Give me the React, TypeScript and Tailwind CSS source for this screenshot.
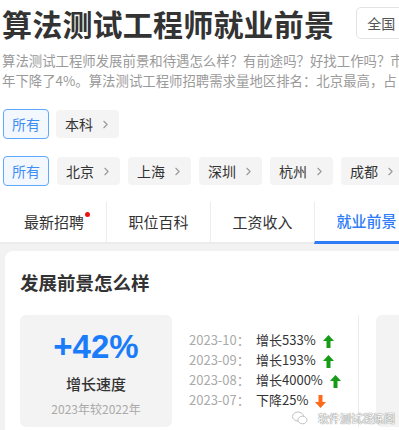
import { ChevronRight } from "lucide-react";

const DEGREES = ["本科"];
const CITIES = ["北京", "上海", "深圳", "杭州", "成都"];
const TABS = ["最新招聘", "职位百科", "工资收入", "就业前景"];
const TREND = [
  { month: "2023-10", label: "增长533%", up: true },
  { month: "2023-09", label: "增长193%", up: true },
  { month: "2023-08", label: "增长4000%", up: true },
  { month: "2023-07", label: "下降25%", up: false },
];

function Arrow({ up }: { up: boolean }) {
  return (
    <svg width="11" height="13" viewBox="0 0 11 13" className={up ? "" : "rotate-180"}>
      <path d="M5.5 0 L11 6 L7.5 6 L7.5 13 L3.5 13 L3.5 6 L0 6 Z" fill={up ? "#169b16" : "#ff6a1a"} />
    </svg>
  );
}

function Tag({ text, active }: { text: string; active?: boolean }) {
  if (active) {
    return (
      <span className="flex h-[30px] w-[46px] shrink-0 items-center justify-center rounded-[4px] border border-[#5ea8ff] bg-[#f3f8ff] text-[14px] text-[#3d8df5]">
        {text}
      </span>
    );
  }
  return (
    <span className="flex h-[28px] shrink-0 items-center gap-[6px] rounded-[4px] bg-[#f4f4f4] pl-[9px] pr-[7px] text-[14px] text-[#333]">
      {text}
      <ChevronRight size={13} strokeWidth={2} className="text-[#999]" />
    </span>
  );
}

export default function App() {
  return (
    <div className="relative h-[430px] w-[399px] overflow-hidden bg-white font-['Noto_Sans_CJK_SC','Noto_Sans',sans-serif] text-[#333]">
      <div className="flex items-center gap-[22px] pl-[2px] pt-[3px]">
        <h1 className="shrink-0 text-[30px] font-bold leading-[40px] tracking-[0.2px] text-[#333]">算法测试工程师就业前景</h1>
        <span className="flex h-[32px] w-[60px] shrink-0 items-center rounded-[5px] border border-[#e3e3e3] pl-[10px] text-[14px] text-[#555]">全国</span>
      </div>

      <p className="mt-[7px] pl-[2px] text-[13.4px] leading-[20px] text-[#9a9a9a]">
        <span className="block whitespace-nowrap">算法测试工程师发展前景和待遇怎么样？有前途吗？好找工作吗？市场需求量在2023年较2022</span>
        <span className="block whitespace-nowrap">年下降了4%。算法测试工程师招聘需求量地区排名：北京最高，占</span>
      </p>

      <div className="mt-[19px] flex items-center gap-[7px] pl-[3px]">
        <Tag text="所有" active />
        {DEGREES.map((d) => (
          <Tag key={d} text={d} />
        ))}
      </div>

      <div className="mt-[17px] flex items-center gap-[8px] pl-[3px]">
        <Tag text="所有" active />
        {CITIES.map((c) => (
          <Tag key={c} text={c} />
        ))}
      </div>

      <div className="mt-[16px] flex h-[42px] w-[420px] border-b-[2px] border-[#ececec] pl-[2px]">
        {TABS.map((t, i) => (
          <div
            key={t}
            className={`relative flex w-[104px] shrink-0 items-center justify-center text-[15px] ${i > 0 ? "border-l border-[#ececec]" : ""} ${i === 3 ? "-mb-[2px] border-b-[3px] border-b-[#2e7cf6] font-medium text-[#2e7cf6]" : "text-[#333]"}`}
          >
            <span className="relative">
              {t}
              {i === 0 && <span className="absolute -right-[6px] top-[1px] h-[5px] w-[5px] rounded-full bg-[#ee1111]" />}
            </span>
          </div>
        ))}
      </div>

      <div className="h-full bg-[#f2f2f2] pl-[5px] pt-[7px]">
        <div className="h-full w-[420px] rounded-[8px] bg-white pl-[15px] pt-[18px]">
          <h2 className="text-[18.5px] font-bold leading-[26px] text-[#333]">发展前景怎么样</h2>
          <div className="mt-[20px] flex">
            <div className="flex h-[112px] w-[152px] shrink-0 flex-col items-center rounded-[6px] bg-[#f3f3f3] pt-[13px]">
              <div className="font-['Liberation_Sans',sans-serif] text-[33px] font-bold leading-[38px] text-[#1a7cf9]">+42%</div>
              <div className="mt-[8px] text-[15px] font-medium leading-[20px] text-[#333]">增长速度</div>
              <div className="mt-[7px] text-[12px] leading-[16px] text-[#aaa]">2023年较2022年</div>
            </div>
            <div className="flex flex-col gap-[2px] pl-[17px] pt-[16px]">
              {TREND.map((r) => (
                <div key={r.month} className="flex h-[18px] items-center text-[13px] leading-[18px]">
                  <span className="w-[67px] text-[#aaa]">{r.month}：</span>
                  <span className="text-[#333]">{r.label}</span>
                  <span className="ml-[7px] mt-[2px]">
                    <Arrow up={r.up} />
                  </span>
                </div>
              ))}
            </div>
            <div className="ml-auto mr-[5px] flex w-[62px] shrink-0">
              <div className="h-[112px] w-px bg-[#ececec]" />
              <div className="ml-[17px] h-[112px] flex-1 rounded-[6px] bg-[#f3f3f3]" />
            </div>
          </div>
        </div>
      </div>

      <div className="absolute left-[292px] top-[410px] flex items-center gap-[10px]">
        <svg width="16" height="14" viewBox="0 0 16 14" fill="none" stroke="#bbb" strokeWidth="0.9">
          <ellipse cx="6" cy="5.5" rx="5.5" ry="4.5" />
          <ellipse cx="10.5" cy="9" rx="4.5" ry="3.8" fill="white" />
        </svg>
        <span className="text-[11px] text-white [text-shadow:0_0_1px_#777,0_0_1px_#777]">软件测试凝炼阁</span>
      </div>
    </div>
  );
}
